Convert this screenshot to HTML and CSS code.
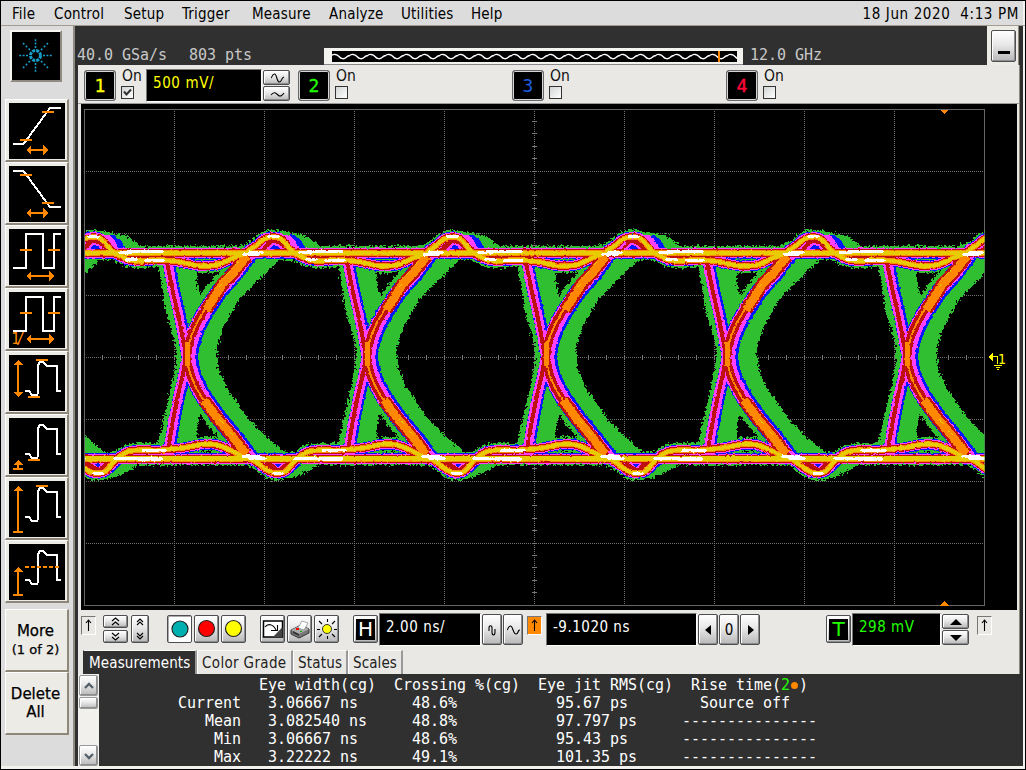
FILE: index.html
```
<!DOCTYPE html>
<html lang="en">
<head>
<meta charset="utf-8">
<title>Oscilloscope</title>
<link rel="stylesheet" href="styles.css">
</head>
<body>
<div class="app">
  <header class="menubar">
    <nav class="menu"><span class="w42">File</span><span class="w70">Control</span><span class="w58">Setup</span><span class="w70">Trigger</span><span class="w77">Measure</span><span class="w72">Analyze</span><span class="w70">Utilities</span><span>Help</span></nav>
    <div class="clock">18 Jun 2020&nbsp; 4:13 PM</div>
  </header>
  <div class="body">
    <aside class="sidebar">
      <div class="logo"><svg width="48" height="48" viewBox="0 0 48 48"><g fill="none" stroke="#189cc8"><circle cx="23.5" cy="23.5" r="5" stroke-width="3" stroke-dasharray="3 .93"/><g stroke-width="1.6" stroke-dasharray="2 1.4"><path d="M23.5 16V6M23.5 31V41M16 23.5H6M31 23.5H41"/><path d="M18 18L11 11M29 29L36 36M18 29L11 36M29 18L36 11" stroke-dasharray="2 2"/></g></g></svg></div>
      <div class="tools" id="tools">
        <div class="tool"><svg class="ico" viewBox="0 0 56 56"><path class="w" d="M4 41H14.5L41 5H52"/><path class="o" d="M11 37H23M33 9H45M20 47H36"/><path class="of" d="M17 47L22 42V52ZM39 47L34 42V52Z"/></svg></div>
        <div class="tool"><svg class="ico" viewBox="0 0 56 56"><path class="w" d="M4 5H14.5L41 41H52"/><path class="o" d="M11 9H23M33 37H45M20 47H36"/><path class="of" d="M17 47L22 42V52ZM39 47L34 42V52Z"/></svg></div>
        <div class="tool"><svg class="ico" viewBox="0 0 56 56"><path class="w" d="M4 39H17V5H34V39H45V5H52"/><path class="o" d="M11 21H23M39 21H51M20 47H42"/><path class="of" d="M17 47L22 42V52ZM45 47L40 42V52Z"/></svg></div>
        <div class="tool"><svg class="ico" viewBox="0 0 56 56"><path class="w" d="M4 39H17V5H34V39H45V5H52"/><path class="o" d="M11 21H23M39 21H51M20 47H42"/><path class="of" d="M17 47L22 42V52ZM45 47L40 42V52Z"/><text x="2" y="52" class="frac" textLength="14">1/</text></svg></div>
        <div class="tool"><svg class="ico" viewBox="0 0 56 56"><path class="w" d="M16 36H20L23 40H28L29 38V10L31 7H34L38 11H48V36H52"/><path class="o" d="M27 5H39M19 42H31M9 8V39"/><path class="of" d="M9 5L4 10H14ZM9 42L4 37H14Z"/></svg></div>
        <div class="tool"><svg class="ico" viewBox="0 0 56 56"><path class="w" d="M16 36H20L23 40H28L29 38V10L31 7H34L38 11H48V36H52"/><path class="o" d="M19 42H31M9 44V51M4 51H14"/><path class="of" d="M9 42L4 47H14Z"/></svg></div>
        <div class="tool"><svg class="ico" viewBox="0 0 56 56"><path class="w" d="M16 36H20L23 40H28L29 38V10L31 7H34L38 11H48V36H52"/><path class="o" d="M27 5H39M9 8V51M4 51H14"/><path class="of" d="M9 5L4 10H14Z"/></svg></div>
        <div class="tool"><svg class="ico" viewBox="0 0 56 56"><path class="w" d="M16 36H20L23 40H28L29 38V10L31 7H34L38 11H48V36H52"/><path class="o" d="M9 26V51M4 51H14"/><path class="o" stroke-dasharray="4 2" d="M16 23H50"/><path class="of" d="M9 23L4 28H14Z"/></svg></div>
        <div class="tool label more">More<small>(1 of 2)</small></div>
        <div class="tool label">Delete<span>All</span></div>
      </div>
    </aside>
    <main class="main">
      <section class="status">
        <span class="rate">40.0 GSa/s</span><span class="pts">803 pts</span>
        <div class="memory"><svg width="405" height="11" viewBox="0 0 405 11"><defs><pattern id="wave" width="18" height="11" patternUnits="userSpaceOnUse"><path d="M0 4.5C1 3 5 3 7 5.500S12 8.500 14 6.500S17 4.500 18 4.500" fill="none" stroke="#fff" stroke-width="1.3"/></pattern></defs><path fill="#000" d="M0 0H405V11H0Z"/><path fill="url(#wave)" d="M0 0H405V11H0Z"/><path fill="#f80" d="M386 0h2v11h-2z"/></svg></div>
        <span class="bw">12.0 GHz</span>
        <div class="minpanel"><div class="btn minbtn"><i></i></div></div>
      </section>
      <section class="channels">
        <div class="channel"><div class="chbtn c1">1</div><div class="on">On<div class="check"><svg width="11" height="11" viewBox="0 0 11 11"><path d="M2 4.500L4.500 7.500L9 2.500" fill="none" stroke="#333" stroke-width="2"/></svg></div></div><div class="field volts">500 mV/</div><div class="stack"><div class="btn half"><svg width="22" height="12" viewBox="0 0 22 12"><path class="k" d="M5 6C6 6 6 2 8.500 2C11 2 10.500 10 13.500 10C16 10 15 6 18 5"/></svg></div><div class="btn half"><svg width="22" height="12" viewBox="0 0 22 12"><path class="k" d="M5 7C8 3 10 5 12 7S16 8 18 5"/></svg></div></div></div>
        <div class="channel"><div class="chbtn c2">2</div><div class="on">On<div class="check"></div></div></div>
        <div class="channel"><div class="chbtn c3">3</div><div class="on">On<div class="check"></div></div></div>
        <div class="channel"><div class="chbtn c4">4</div><div class="on">On<div class="check"></div></div></div>
      </section>
      <section class="plot">
<svg width="936" height="506" viewBox="81 104 936 506" shape-rendering="crispEdges">
<defs>
  <clipPath id="area"><path d="M85 110H984.500V605H85Z"/></clipPath>
  <filter id="rough" filterUnits="userSpaceOnUse" x="81" y="200" width="910" height="310" color-interpolation-filters="sRGB"><feTurbulence type="fractalNoise" baseFrequency=".45" numOctaves="2" seed="4" result="n"/><feDisplacementMap in="SourceGraphic" in2="n" scale="7" xChannelSelector="R" yChannelSelector="G"/></filter>
  <filter id="fine" filterUnits="userSpaceOnUse" x="81" y="200" width="910" height="310" color-interpolation-filters="sRGB"><feTurbulence type="fractalNoise" baseFrequency=".3" numOctaves="2" seed="9" result="n"/><feDisplacementMap in="SourceGraphic" in2="n" scale="2.500" xChannelSelector="R" yChannelSelector="G"/></filter>
  <g id="lines">
    <path class="rail" d="M264 253H446M264 458.500H446"/>
    <path class="hump" d="M273 237C282 236 286 245 291 250S302 257 306 259S315 261 320 261S335 259 343 260S354 261 360 262S375 266 383 266S395 266 400 264S409 260 413 258S424 255 427 252S434 247 437 245S442 237 453 237M278 473C287 474 290 465 295 461S301 454 307 452S315 450 323 450S335 451 343 450S354 449 363 448S377 444 387 444S398 445 403 447S414 452 420 455S429 458 433 460S442 467 447 470S453 473 458 473"/>
  </g>
  <g id="curve"><path class="curve" d="M430 250L425 257L413 273L397 291L383 312Q368 336 367 357Q368 376 382 398L397 419L413 438L425 454L430 460"/></g>
  <g id="thick"><path class="thick" d="M427 256L415 271L402 285L394 298L386 310M384 400L398 419L413 437L426 454"/></g>
  <g id="core"><path class="core" d="M367 342V366"/></g>
  <g id="left"><path class="left" d="M347 262L352 288L358 314Q363 338 366 357Q363 377 358 395L353 420L348 449"/></g>
  <g id="pgreen">
    <path d="M338 262L346 312L355 342L357 358L350 392L337 448H376L377 430L380 413L370 357L380 294L377 282V264Z"/>
    <path d="M418 258L408 272L390 285L372 318L364 342V370L376 400L390 421L404 430L418 450L470 458L457 446L440 431L427 417L407 388L398 368L397 348L403 328L420 298L440 278L452 267L465 254Z"/>
    <path d="M246 251L260 236L270 231L282 231L293 233L307 236L317 243L325 250ZM250 461L262 473L277 480L293 478L310 470L325 461Z"/>
  </g>
  <g id="pblue">
    <path d="M255 251L264 237L272 234L294 235L301 240L307 251ZM260 461L270 472L283 477L292 473L306 460Z"/>
    <path d="M412 258L440 254L427 268L415 283H405ZM410 448L441 457L429 445L415 429H400Z"/>
  </g>
  <g id="pmag">
    <path d="M255 251L264 237L272 235L289 235L295 241L300 250ZM259 461L270 472L282 475L289 473L300 461Z"/>
    <path d="M416 257L436 253L424 268L410 284H400ZM414 452L437 458L427 447L410 429H400Z"/>
  </g>
  <g id="pred"><path d="M260 251L269 239L280 241L288 251ZM263 461L272 472L283 472L291 461Z"/></g>
  <g id="phole"><path fill="#ff40ff" d="M265 250L272 243L279 244L283 249ZM270 463L284 463L279 468Z"/><path fill="#0018ff" d="M269 249L274 245L278 246L280 249ZM274 464L281 464L278 467Z"/></g>
  <g id="pwhite"><path d="M300 252.500H311M308 251.500H342M424 254.500H438M430 252.500H442M307 259.500H316M326 260.500H343M269 236.500H278M295 458.500H338M318 459H342M423 456.500H439M430 458.500H444M323 450.500H345M274 473.500H282"/></g>
  <g id="pspeck"><path d="M406 275L410 271M415 265L418 262M399 287L402 284M399 419L404 424M409 431L413 435"/></g>

  <g id="aLines"><use href="#lines" x="-360"/><use href="#lines" x="-180"/><use href="#lines"/><use href="#lines" x="179"/><use href="#lines" x="360"/><use href="#lines" x="540"/></g>
  <g id="aCurve"><use href="#curve" x="-360"/><use href="#curve" x="-180"/><use href="#curve"/><use href="#curve" x="179"/><use href="#curve" x="360"/><use href="#curve" x="540"/></g>
  <g id="aThick"><use href="#thick" x="-360"/><use href="#thick" x="-180"/><use href="#thick"/><use href="#thick" x="179"/><use href="#thick" x="360"/><use href="#thick" x="540"/></g>
  <g id="aCore"><use href="#core" x="-180"/><use href="#core"/><use href="#core" x="179"/><use href="#core" x="360"/><use href="#core" x="540"/></g>
  <g id="aLeft"><use href="#left" x="-180"/><use href="#left"/><use href="#left" x="179"/><use href="#left" x="360"/><use href="#left" x="540"/></g>
</defs>
<path fill="#000" d="M81 104H1017V610H81Z"/>
<path class="frame" d="M84.500 109.500H984.500V605.500H84.500Z"/>
<path class="grid" d="M174.500 111V605M264.500 111V605M354.500 111V605M444.500 111V605M534.500 111V605M624.500 111V605M714.500 111V605M804.500 111V605M894.500 111V605M86 171.500H984M86 233.500H984M86 295.500H984M86 357.500H984M86 419.500H984M86 481.500H984M86 543.500H984"/>
<path class="tick-h" d="M102 357.500H984"/><path class="tick-v" d="M534.500 121V605"/>
<g clip-path="url(#area)">
  <g class="green" filter="url(#rough)">
    <g fill="#30bf30" stroke="none"><use href="#pgreen" x="-360"/><use href="#pgreen" x="-180"/><use href="#pgreen"/><use href="#pgreen" x="179"/><use href="#pgreen" x="360"/><use href="#pgreen" x="540"/><use href="#pgreen" x="720"/></g>
    <use href="#aLines"/><use href="#aCurve"/>
  </g>
  <g filter="url(#fine)">
    <g class="blue"><g fill="#0018ff" stroke="none"><use href="#pblue" x="-360"/><use href="#pblue" x="-180"/><use href="#pblue"/><use href="#pblue" x="179"/><use href="#pblue" x="360"/><use href="#pblue" x="540"/><use href="#pblue" x="720"/></g><use href="#aLines"/><use href="#aCurve" x="2.500"/><use href="#aLeft" x="1.500"/></g>
    <g class="mag"><g fill="#ff40ff" stroke="none"><use href="#pmag" x="-360"/><use href="#pmag" x="-180"/><use href="#pmag"/><use href="#pmag" x="179"/><use href="#pmag" x="360"/><use href="#pmag" x="540"/><use href="#pmag" x="720"/></g><use href="#aLines"/><use href="#aCurve" x="1.500"/><use href="#aLeft" x=".5"/></g>
    <g class="red"><g fill="#bf1010" stroke="none"><use href="#pred" x="-180"/><use href="#pred"/><use href="#pred" x="179"/><use href="#pred" x="360"/><use href="#pred" x="540"/><use href="#pred" x="720"/></g><use href="#aLines"/><use href="#aCurve"/><use href="#aThick"/><use href="#aLeft"/></g>
    <g><use href="#phole" x="-180"/><use href="#phole"/><use href="#phole" x="180"/><use href="#phole" x="358"/><use href="#phole" x="540"/></g>
    <g class="orange"><use href="#aLines"/><use href="#aCurve"/><use href="#aThick"/><use href="#aCore"/></g>
    <g class="yellow"><use href="#aLines"/><g stroke-width="1.300"><use href="#pspeck" x="-180"/><use href="#pspeck"/><use href="#pspeck" x="179"/><use href="#pspeck" x="360"/><use href="#pspeck" x="540"/></g></g>
    <g stroke="#fff" stroke-width="3.200" stroke-linecap="round"><use href="#pwhite" x="-360"/><use href="#pwhite" x="-180"/><use href="#pwhite"/><use href="#pwhite" x="179"/><use href="#pwhite" x="360"/><use href="#pwhite" x="540"/></g>
  </g>
</g>
<path fill="#f80" d="M940 109.500H949L944.500 114ZM940 605.500H949L944.500 601Z"/>
<path fill="#ff0" d="M988 357L993 352V361Z"/><path d="M992 356.500H997.500V364M993.500 365.500H1002M995.500 367.500H1000M996.500 369.500H999" stroke="#ff0" fill="none"/><text class="ground" x="998" y="364">1</text>
</svg>
      </section>
      <section class="controls">
        <div class="sunk first"><svg width="14" height="18" viewBox="0 0 14 18"><path class="k" d="M6.500 3V14M4 6L6.500 3L9 6"/></svg></div>
        <div class="stack chev"><div class="btn"><svg width="23" height="11" viewBox="0 0 23 11"><path class="k" d="M8 5L11.500 2L15 5M8 9L11.500 6L15 9"/></svg></div><div class="btn"><svg width="23" height="11" viewBox="0 0 23 11"><path class="k" d="M8 2L11.500 5L15 2M8 6L11.500 9L15 6"/></svg></div></div>
        <div class="btn tall"><svg width="16" height="26" viewBox="0 0 16 26"><path class="k" d="M5 6L8 3L11 6M5 9L8 6L11 9M5 17L8 20L11 17M5 20L8 23L11 20"/></svg></div>
        <div class="btn sq pressed run"><svg width="22" height="22"><circle class="dot teal" cx="11" cy="11" r="8"/></svg></div>
        <div class="btn sq"><svg width="22" height="22"><circle class="dot redd" cx="10.500" cy="10.500" r="8"/></svg></div>
        <div class="btn sq"><svg width="22" height="22"><circle class="dot yel" cx="10.500" cy="10.500" r="8"/></svg></div>
        <div class="btn sq clear"><svg width="22" height="22"><path fill="#fff" stroke="#000" stroke-width="1.500" d="M1.500 3H20.500V19H1.500Z"/><path fill="#444" d="M20.500 9V19H11Z"/><path class="k" d="M3 9C6 5 11 6 14 12M15.500 7V12.500H9"/></svg></div>
        <div class="btn sq"><svg width="22" height="22"><path d="M2 12L12 7L20 11V15L10 20L2 16Z" fill="#777" stroke="#333"/><path d="M2 12L12 7L20 11L10 16Z" fill="#aaa"/><path d="M9 10L13 3L19 5L15 12Z" fill="#fff" stroke="#888" stroke-width=".7"/><path d="M4 13L10 16V18L4 15Z" fill="#333"/><path fill="#f00" d="M7 10h3v2H7z"/><path fill="#0b0" d="M11 13h2v1h-2z"/></svg></div>
        <div class="btn sq"><svg width="22" height="22"><circle cx="11" cy="11" r="4.500" fill="#ff0" stroke="#333"/><path class="k" d="M11.500 1V4M11.500 18V21M1 11.500H4M18 11.500H21M3 3L6 6M16 16L19 19M3 19L6 16M16 6L19 3"/></svg></div>
        <div class="btn sq hbtn"><b>H</b></div>
        <div class="field hscale">2.00 ns/</div>
        <div class="btn zoom zfirst"><svg width="17" height="26" viewBox="0 0 17 26"><path class="k" d="M5 14V11C5 8 8 8 8 11V15C8 19 11 19 11 15V12"/></svg></div>
        <div class="btn zoom"><svg width="17" height="26" viewBox="0 0 17 26"><path class="k" d="M2 13C3 13 3 9 5.500 9C8 9 8 17 11 17C14 17 12 13 15 13"/></svg></div>
        <div class="sunk orange-bg"><svg width="14" height="18" viewBox="0 0 14 18"><path class="k" d="M6.500 3V14M4 6L6.500 3L9 6"/></svg></div>
        <div class="field hpos">-9.1020 ns</div>
        <div class="btn zoom"><svg width="17" height="26"><path d="M11 8V18L5 13Z"/></svg></div>
        <div class="btn zoom">0</div>
        <div class="btn zoom"><svg width="17" height="26"><path d="M6 8V18L12 13Z"/></svg></div>
        <div class="btn sq trig"><b class="t">T</b></div>
        <div class="field level">298 mV</div>
        <div class="stack"><div class="btn half"><svg width="24" height="13"><path d="M6 10H18L12 4Z"/></svg></div><div class="btn half"><svg width="24" height="13"><path d="M6 4H18L12 10Z"/></svg></div></div>
        <div class="sunk last"><svg width="14" height="18" viewBox="0 0 14 18"><path class="k" d="M6.500 3V14M4 6L6.500 3L9 6"/></svg></div>
      </section>
      <section class="tabs"><div class="tab active">Measurements</div><div class="tab grade">Color Grade</div><div class="tab stat">Status</div><div class="tab scales">Scales</div></section>
      <section class="results">
        <div class="scroll"><div class="btn sb"><svg width="16" height="18"><path d="M4 11L8 7L12 11" fill="none" stroke="#555f6a" stroke-width="2.300"/></svg></div><div class="btn thumb"></div><div class="btn sb end"><svg width="16" height="18"><path d="M4 7L8 11L12 7" fill="none" stroke="#555f6a" stroke-width="2.300"/></svg></div></div>
        <div class="table">
          <span></span><span>Eye width(cg)</span><span>Crossing %(cg)</span><span>Eye jit RMS(cg)</span><span> Rise time(<em>2</em><i></i>)</span>
          <span>Current</span><span> 3.06667 ns</span><span>  48.6%</span><span>  95.67 ps</span><span>  Source off</span>
          <span>Mean</span><span> 3.082540 ns</span><span>  48.8%</span><span>  97.797 ps</span><span>---------------</span>
          <span>Min</span><span> 3.06667 ns</span><span>  48.6%</span><span>  95.43 ps</span><span>---------------</span>
          <span>Max</span><span> 3.22222 ns</span><span>  49.1%</span><span>  101.35 ps</span><span>---------------</span>
        </div>
      </section>
    </main>
  </div>
</div>
</body>
</html>
```
FILE: styles.css
```
*{box-sizing:border-box}
html,body{margin:0}
body{width:1026px;height:770px;overflow:hidden;background:#000;color:#000;font:15px "DejaVu Sans Condensed","DejaVu Sans",sans-serif;font-stretch:condensed}
svg{display:block;flex:none}
.app{width:1026px;height:770px;border:1px solid #000;background:#dcdcdc;box-shadow:inset -2px -3px #f4f2ee;display:flex;flex-direction:column}
.menubar{height:25px;flex:none;display:flex;justify-content:space-between;padding:0 7px 0 11px;line-height:26px;border-bottom:1px solid #a29c90}
.menu{display:flex;letter-spacing:.2px}
.menu span{white-space:nowrap}
.w42{width:42px}.w58{width:58px}.w70{width:70px}.w72{width:72px}.w77{width:77px}
.clock{white-space:nowrap;letter-spacing:.62px;margin-right:-1px}
.body{height:743px;display:flex}
.sidebar{width:74px;flex:none;height:740px;border-right:2px solid #8f8a82;padding-top:4px;background:#dcdcdc}
.logo{width:52px;height:52px;margin-left:9px;background:#000;border:2px solid;border-color:#f7f5f0 #8f8a82 #8f8a82 #f7f5f0}
.tools{margin:17px 0 0 4px;width:64px}
.tool{height:63px;width:64px;border:1px solid;border-color:#fff #8f887a #8f887a #fff;border-right-width:2px;border-bottom-width:2px;background:#ecebe6;padding:3px 3px 2px}
.ico{width:56px;height:56px;background:#000;shape-rendering:crispEdges}
.ico .w{fill:none;stroke:#fff;stroke-width:2}
.ico .o{fill:none;stroke:#f80;stroke-width:2}
.ico .of{fill:#f80}
.frac{font:15px "DejaVu Sans Mono",monospace;fill:#f80}
.label{display:flex;flex-direction:column;align-items:center;justify-content:center;font:15px/18px "DejaVu Sans",sans-serif;-webkit-text-stroke:.25px #000;padding:0 2px 0 0}
.more{margin-top:6px}
.label small{font-size:13px;line-height:19px}
.main{width:948px;height:740px;flex:none;background:#303030;border-right:3px solid #303030;display:flex;flex-direction:column}
.status{height:39px;flex:none;display:flex;font:15px/17px "DejaVu Sans Mono",monospace;letter-spacing:-.03px;color:#c8c8c8;padding-left:2px}
.status span{padding-top:21px;white-space:nowrap}
.rate{width:112px}.pts{width:135px}
.memory{width:419px;height:17px;margin-top:22px;padding:3px 6px 3px 8px;background:#f4f2ee;border-bottom:1px solid #888}
.bw{margin-left:7px;width:237px}
.minpanel{width:32px;height:39px;flex:none;background:#ecebe6;border-right:1px solid #8f887a;padding:4px 3px}
.btn{border:1px solid #4c4e50;border-radius:2px;background:linear-gradient(#fff,#e8e8e8 45%,#b8b8b8);box-shadow:inset -1px -1px #8b8d8e,inset 1px 1px #fff;display:flex;align-items:center;justify-content:center;flex:none;overflow:hidden}
.minbtn{width:25px;height:32px;margin-left:1px}
.minbtn i{width:12px;height:3px;background:#000;margin-top:12px}
.channels{height:39px;flex:none;margin-left:3px;width:942px;background:#e9e8e4;display:flex;padding:4px 0 0 6px;border-right:1px solid #8f887a;border-bottom:1px solid #999}
.channel{display:flex;width:214px;flex:none}
.channel:last-child{width:100px}
.chbtn{width:32px;height:31px;margin-top:1px;border:1px solid #66686a;border-radius:3px;background:#000;box-shadow:inset 0 0 0 1px #d5d5d5;text-align:center;font:18px/29px "DejaVu Sans Mono",monospace;flex:none}
.c1{color:#ff0;-webkit-text-stroke:.3px #ff0}.c2{color:#2f0;-webkit-text-stroke:.3px #2f0}.c3{color:#1e5ee0}.c4{color:#ff0838;-webkit-text-stroke:.4px #ff0838}
.on{width:25px;margin-left:5px;text-indent:1px;font-size:15.500px;line-height:14px;color:#111;flex:none}
.check{width:13px;height:13px;margin:3px 0 0;border:1px solid #333;background:linear-gradient(135deg,#d2d4d4,#fff)}
.field{background:#000;border:1px solid #777;border-right-color:#fff;border-bottom-color:#fff;padding:0 6px;white-space:nowrap;letter-spacing:.6px;flex:none}
.volts{width:116px;height:33px;color:#ff0;line-height:27px}
.stack{display:flex;flex-direction:column;gap:1px;margin:1px 0 0 1px;flex:none}
.half{width:27px;height:15px}
.k{fill:none;stroke:#000;stroke-width:1.100}
.plot{width:942px;height:506px;flex:none;margin-left:3px;padding-left:3px;background:#e9e8e4;border-right:1px solid #8f887a}
.frame{fill:none;stroke:#666}
.grid{fill:none;stroke:#707070;stroke-dasharray:1 1}
.tick-h{fill:none;stroke:#777;stroke-width:5;stroke-dasharray:1 17}
.tick-v{fill:none;stroke:#777;stroke-width:5;stroke-dasharray:1 11.400}
.rail,.hump,.curve,.thick,.left,.core{fill:none;stroke-linejoin:round}
.rail{stroke-width:var(--rail)}.hump{stroke-width:var(--hump)}.curve{stroke-width:var(--curve)}.thick{stroke-width:var(--thick)}.left{stroke-width:var(--left)}.core{stroke-width:5px}
.green{stroke:#30bf30;--rail:13.5px;--hump:14px;--curve:22px;--thick:0;--left:0}
.blue{stroke:#0018ff;--rail:11px;--hump:11px;--curve:17px;--thick:0;--left:12px}
.mag{stroke:#ff40ff;--rail:10px;--hump:9.5px;--curve:13.5px;--thick:0;--left:9.5px}
.red{stroke:#bf1010;--rail:8px;--hump:7.5px;--curve:8.5px;--thick:13px;--left:4px}
.orange{stroke:#f80;--rail:6px;--hump:5.5px;--curve:2px;--thick:8.5px;--left:0}
.yellow{stroke:#e6cc00;--rail:4.500px;--hump:3.700px;--curve:0;--thick:0;--left:0}
.ground{font:14px "DejaVu Sans Condensed","DejaVu Sans",sans-serif;fill:#ff0}
.controls{height:40px;flex:none;width:942px;margin-left:3px;background:#e9e8e4;border-right:1px solid #8f887a;display:flex;padding-top:3px;align-items:flex-start}
.sunk{width:15px;height:19px;margin-top:3px;border:1px solid;border-color:#777 #fff #fff #777;flex:none}
.first{margin-left:3px}
.chev{margin:2px 0 0 7px;gap:2px}
.chev .btn{width:25px;height:13px}
.tall{width:18px;height:28px;margin:2px 0 0 3px}
.sq{width:25px;height:28px;margin:2px 2px 0 0}
.run{margin-left:18px}.pressed{background:#fff;box-shadow:inset 1px 1px #aaa}
.clear{margin-left:12px}
.dot{stroke:#222;stroke-width:1.200}.teal{fill:#00b0b0}.redd{fill:red}.yel{fill:#ff0}
.hbtn{margin-left:12px;margin-right:1px}
.sq b{width:19px;height:21px;background:#000;color:#fff;font:20px/21px "DejaVu Sans",sans-serif;text-align:center}
.sq b.t{color:#2f0}
.controls .field{height:33px;color:#fff;line-height:26px}
.hscale{width:102px}
.zoom{width:20px;height:31px;margin:1px 0 0 1px}
.orange-bg{background:#f80;margin-left:4px}
.hpos{width:151px;margin-left:4px}
.controls .hpos{letter-spacing:.5px}
.trig{margin:2px 1px 0 66px}
.controls .level{width:89px;color:#2f0;letter-spacing:.5px}
.last{margin-left:8px}
.tabs{height:24px;flex:none;width:942px;margin-left:3px;background:#e9e8e4;border-right:1px solid #8f887a;display:flex;padding-left:5px}
.tab{height:24px;line-height:24px;padding-left:4px;border-left:1px solid #fff;border-top:1px solid #f8f8f6;border-right:2px solid #999;white-space:nowrap;color:#222;letter-spacing:.35px}
.active{width:114px;padding-left:5px;background:#303030;border-left-color:#303030;color:#fff;letter-spacing:.15px}
.grade{width:96px}.stat{width:55px;letter-spacing:.2px}.scales{width:55px;letter-spacing:.1px}
.results{height:92px;display:flex;margin-left:3px}
.scroll{width:21px;height:92px;display:flex;flex-direction:column;background:#f1f0ec;padding:1px 1px 0}
.sb{width:19px;height:21px;border-color:#999}.thumb{width:19px;height:12px;border-color:#999;margin-top:1px}.end{margin-top:auto}
.table{display:grid;grid-template-columns:142px 153px 144px 144px 145px;grid-auto-rows:18px;padding-top:2px;color:#fff;font:15px/18px "DejaVu Sans Mono",monospace;letter-spacing:-.03px}
.table span{white-space:pre}
.table span:nth-child(5n+1){text-align:right}
.table span:nth-child(5n+2){padding-left:18px}
.table em{font-style:normal;color:#2f0}
.table i{display:inline-block;width:7px;height:7px;border-radius:50%;background:#f80;margin:0 1px;vertical-align:1px}
```
